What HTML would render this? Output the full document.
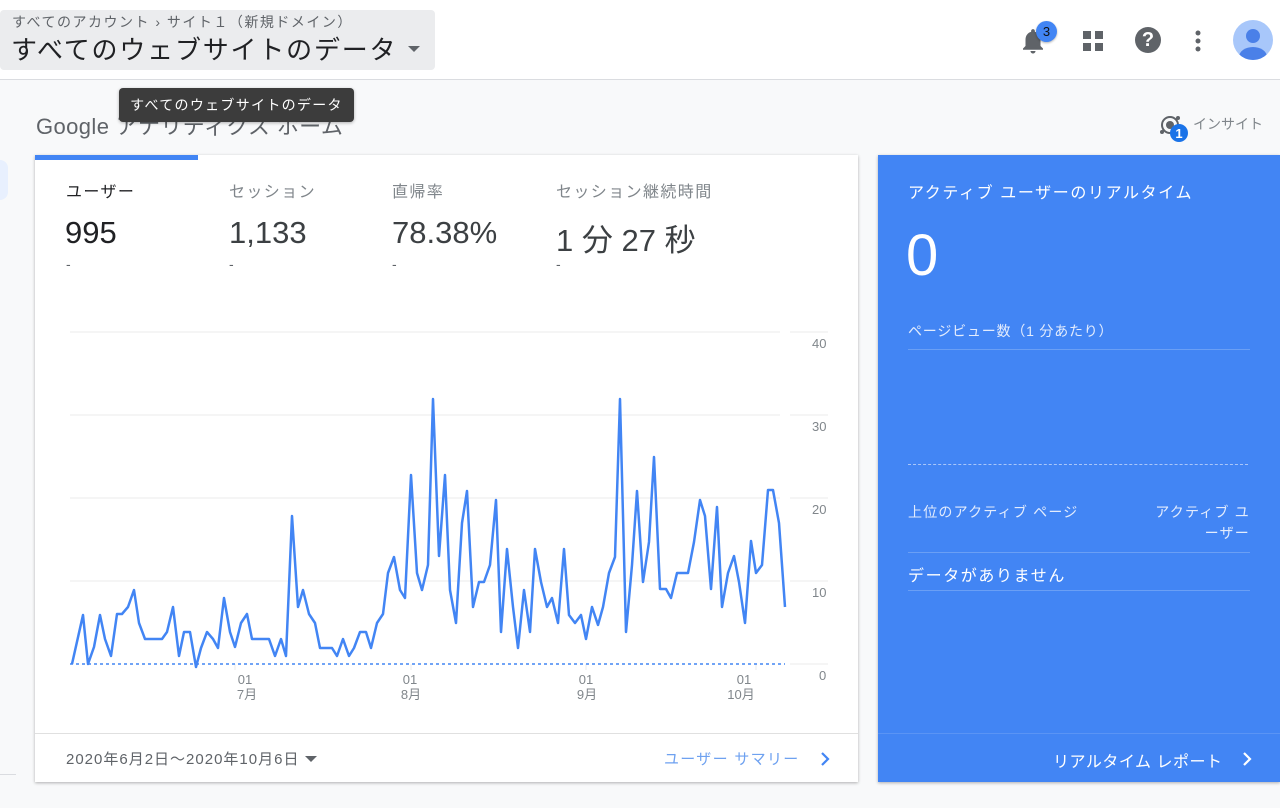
<!DOCTYPE html>
<html><head><meta charset="utf-8"><style>
*{margin:0;padding:0;box-sizing:border-box}
body{width:1280px;height:808px;overflow:hidden;background:#f8f9fa;font-family:"Liberation Sans","Noto Sans CJK JP",sans-serif;position:relative;color:#202124}
.a{position:absolute;white-space:nowrap}
</style></head><body>
<div class="a" style="left:0;top:0;width:1280px;height:80px;background:#fff;border-bottom:1px solid #dadce0"></div>
<div class="a" style="left:0;top:10px;width:435px;height:60px;background:#ebecee;border-radius:4px"></div>
<div class="a" style="left:12px;top:12px;font-size:14px;color:#5f6368;letter-spacing:1.5px">すべてのアカウント › サイト１（新規ドメイン）</div>
<div class="a" style="left:11px;top:30px;font-size:26px;color:#202124;letter-spacing:1.8px">すべてのウェブサイトのデータ</div>
<svg class="a" style="left:407px;top:45px" width="14" height="8"><path d="M1 1h12L7 7z" fill="#5f6368"/></svg>

<svg class="a" style="left:1018px;top:26px" width="30" height="30" viewBox="0 0 24 24"><path d="M12 22c1.1 0 2-.9 2-2h-4c0 1.1.9 2 2 2zm6-6v-5c0-3.070-1.64-5.64-4.5-6.32V4c0-.83-.67-1.5-1.5-1.5s-1.5.67-1.5 1.5v.68C7.630 5.36 6 7.920 6 11v5l-2 2v1h16v-1l-2-2z" fill="#5f6368"/></svg>
<div class="a" style="left:1036px;top:21px;width:21px;height:21px;border-radius:50%;background:#4285f4;color:#111;font-size:13px;text-align:center;line-height:21px;box-shadow:0 1px 2px rgba(0,0,0,.3)">3</div>
<svg class="a" style="left:1082px;top:30px" width="22" height="22"><rect x="1" y="1" width="8" height="8" fill="#5f6368"/><rect x="13" y="1" width="8" height="8" fill="#5f6368"/><rect x="1" y="13" width="8" height="8" fill="#5f6368"/><rect x="13" y="13" width="8" height="8" fill="#5f6368"/></svg>
<div class="a" style="left:1135px;top:27px;width:26px;height:26px;border-radius:50%;background:#5f6368;color:#fff;font-size:20px;font-weight:bold;text-align:center;line-height:26px">?</div>
<svg class="a" style="left:1193px;top:29px" width="10" height="24"><circle cx="5" cy="4" r="2.5" fill="#5f6368"/><circle cx="5" cy="12" r="2.5" fill="#5f6368"/><circle cx="5" cy="20" r="2.5" fill="#5f6368"/></svg>
<svg class="a" style="left:1233px;top:20px" width="40" height="40"><defs><clipPath id="c"><circle cx="20" cy="20" r="20"/></clipPath></defs><circle cx="20" cy="20" r="20" fill="#a8c7fa"/><g clip-path="url(#c)" fill="#4a80e8"><circle cx="20" cy="16" r="7"/><ellipse cx="20" cy="37" rx="14" ry="10"/></g></svg>

<div class="a" style="left:36px;top:109px;font-size:22px;color:#5f6368;letter-spacing:.4px">Google アナリティクス ホーム</div>
<div class="a" style="left:119px;top:88px;width:235px;height:34px;background:#3c3c3c;border-radius:4px;color:#fff;font-size:14px;line-height:34px;text-align:center;letter-spacing:1.3px;box-shadow:0 1px 3px rgba(0,0,0,.3)">すべてのウェブサイトのデータ</div>

<svg class="a" style="left:1156px;top:112px" width="36" height="32"><circle cx="14" cy="13" r="8" fill="none" stroke="#5f6368" stroke-width="2"/><circle cx="14" cy="13" r="4" fill="#5f6368"/><circle cx="22" cy="6" r="2" fill="#5f6368"/><circle cx="6" cy="20" r="2" fill="#5f6368"/><circle cx="23" cy="21" r="9" fill="#1a73e8"/><text x="23" y="26" font-size="13" font-weight="bold" fill="#fff" text-anchor="middle" font-family="Liberation Sans">1</text></svg>
<div class="a" style="left:1193px;top:114px;font-size:14px;color:#80868b">インサイト</div>

<div class="a" style="left:0;top:160px;width:8px;height:40px;background:#e8f0fe;border-radius:0 20px 20px 0"></div>
<div class="a" style="left:0;top:774px;width:16px;height:1px;background:#dadce0"></div>

<div class="a" style="left:35px;top:155px;width:823px;height:627px;background:#fff;box-shadow:0 1px 3px rgba(0,0,0,.3)"></div>
<div class="a" style="left:35px;top:155px;width:163px;height:5px;background:#4285f4"></div>
<div class="a" style="left:66px;top:178px;font-size:16px;color:#202124;letter-spacing:1.4px">ユーザー</div>
<div class="a" style="left:229px;top:178px;font-size:16px;color:#80868b;letter-spacing:1.4px">セッション</div>
<div class="a" style="left:392px;top:178px;font-size:16px;color:#80868b;letter-spacing:1.4px">直帰率</div>
<div class="a" style="left:556px;top:178px;font-size:16px;color:#80868b;letter-spacing:1.4px">セッション継続時間</div>
<div class="a" style="left:65px;top:215px;font-size:31px;color:#202124">995</div>
<div class="a" style="left:229px;top:215px;font-size:31px;color:#3c4043">1,133</div>
<div class="a" style="left:392px;top:215px;font-size:31px;color:#3c4043">78.38%</div>
<div class="a" style="left:556px;top:215px;font-size:31px;color:#3c4043">1 分 27 秒</div>
<div class="a" style="left:66px;top:256px;font-size:14px;color:#5f6368">-</div>
<div class="a" style="left:229px;top:256px;font-size:14px;color:#5f6368">-</div>
<div class="a" style="left:392px;top:256px;font-size:14px;color:#5f6368">-</div>
<div class="a" style="left:556px;top:256px;font-size:14px;color:#5f6368">-</div>

<svg class="a" style="left:35px;top:300px" width="823" height="420">
<g transform="translate(-35,-300)">
<g stroke="#ebebeb" stroke-width="1">
<line x1="70" y1="332" x2="780" y2="332"/><line x1="70" y1="415" x2="780" y2="415"/><line x1="70" y1="498" x2="780" y2="498"/><line x1="70" y1="581" x2="780" y2="581"/>
<line x1="790" y1="332" x2="828" y2="332"/><line x1="790" y1="415" x2="828" y2="415"/><line x1="790" y1="498" x2="828" y2="498"/><line x1="790" y1="581" x2="828" y2="581"/><line x1="790" y1="664" x2="828" y2="664"/>
<line x1="235" y1="664" x2="235" y2="670"/><line x1="411" y1="664" x2="411" y2="670"/><line x1="586" y1="664" x2="586" y2="670"/><line x1="756" y1="664" x2="756" y2="670"/>
</g>
<line x1="70" y1="664" x2="785" y2="664" stroke="#4285f4" stroke-width="1.5" stroke-dasharray="3,3"/>
<polyline fill="none" stroke="#4285f4" stroke-width="2.5" stroke-linejoin="round" points="72,664 83,615 88,664 94,647 100,615 105,639 111,656 117,614 122,614 128,607 134,590 139,623 145,639 151,639 162,639 167,632 173,607 179,656 184,632 190,632 196,667 201,648 207,632 213,639 218,648 224,598 230,632 235,647 241,623 247,614 252,639 258,639 269,639 275,656 281,639 286,656 292,516 298,607 303,590 309,614 315,623 320,648 326,648 332,648 337,656 343,639 349,656 354,648 360,632 366,632 371,648 377,623 383,614 388,573 394,557 400,590 405,598 411,475 417,573 422,590 428,565 433,399 439,556 445,475 450,590 456,623 462,523 467,491 473,607 479,582 484,582 490,565 496,500 501,632 507,549 513,607 518,648 524,590 530,632 535,549 541,582 547,607 552,598 558,623 564,549 569,615 575,623 581,615 586,639 592,607 598,625 603,607 609,573 615,557 620,399 626,632 632,565 637,491 643,582 649,542 654,457 660,589 666,589 671,598 677,573 683,573 688,573 694,542 700,500 705,516 711,589 717,507 722,607 728,573 734,556 739,582 745,623 751,541 756,573 762,565 768,490 773,490 779,523 785,607"/>
<g font-size="13" fill="#80868b" font-family="Liberation Sans,Noto Sans CJK JP,sans-serif">
<text x="812" y="348">40</text><text x="812" y="431">30</text><text x="812" y="514">20</text><text x="812" y="597">10</text><text x="819" y="680">0</text>
<g text-anchor="middle"><text x="245" y="684">01</text><text x="247" y="699">7月</text><text x="410" y="684">01</text><text x="411" y="699">8月</text><text x="586" y="684">01</text><text x="587" y="699">9月</text><text x="744" y="684">01</text><text x="741" y="699">10月</text></g>
</g></g></svg>

<div class="a" style="left:35px;top:733px;width:823px;height:1px;background:#e0e0e0"></div>
<div class="a" style="left:66px;top:748px;font-size:15px;color:#5f6368;letter-spacing:1px">2020年6月2日～2020年10月6日</div>
<svg class="a" style="left:305px;top:756px" width="12" height="7"><path d="M0 0h12L6 6z" fill="#5f6368"/></svg>
<div class="a" style="left:664px;top:748px;font-size:15px;color:#6ea1f0;letter-spacing:1.3px">ユーザー サマリー</div>
<svg class="a" style="left:820px;top:751px" width="10" height="16"><path d="M2 2l6 6-6 6" fill="none" stroke="#4285f4" stroke-width="2.2"/></svg>

<div class="a" style="left:878px;top:155px;width:402px;height:627px;background:#4285f4;box-shadow:0 1px 3px rgba(0,0,0,.3)"></div>
<div class="a" style="left:908px;top:179px;font-size:16px;color:#fff;letter-spacing:1.6px">アクティブ ユーザーのリアルタイム</div>
<div class="a" style="left:906px;top:221px;font-size:58px;color:#fff;line-height:70px">0</div>
<div class="a" style="left:908px;top:321px;font-size:14px;color:#e3ecfd;letter-spacing:.8px">ページビュー数（1 分あたり）</div>
<div class="a" style="left:908px;top:349px;width:342px;height:1px;background:#6a9ff5"></div>
<div class="a" style="left:908px;top:464px;width:340px;height:0;border-top:1px dashed #a9c6f9"></div>
<div class="a" style="left:908px;top:502px;font-size:14px;color:#e3ecfd;letter-spacing:1.2px">上位のアクティブ ページ</div>
<div class="a" style="left:1130px;top:502px;width:120px;font-size:14px;color:#e3ecfd;text-align:right;line-height:21px;letter-spacing:1.2px;white-space:normal">アクティブ ユ<br>ーザー</div>
<div class="a" style="left:908px;top:552px;width:342px;height:1px;background:#6a9ff5"></div>
<div class="a" style="left:908px;top:562px;font-size:16px;color:#fff;letter-spacing:1.6px">データがありません</div>
<div class="a" style="left:908px;top:590px;width:342px;height:1px;background:#6a9ff5"></div>
<div class="a" style="left:878px;top:733px;width:402px;height:1px;background:#5a94f5"></div>
<div class="a" style="left:1053px;top:748px;font-size:16px;color:#fff;letter-spacing:.5px">リアルタイム レポート</div>
<svg class="a" style="left:1242px;top:751px" width="10" height="16"><path d="M2 2l6 6-6 6" fill="none" stroke="#fff" stroke-width="2.2"/></svg>
</body></html>
